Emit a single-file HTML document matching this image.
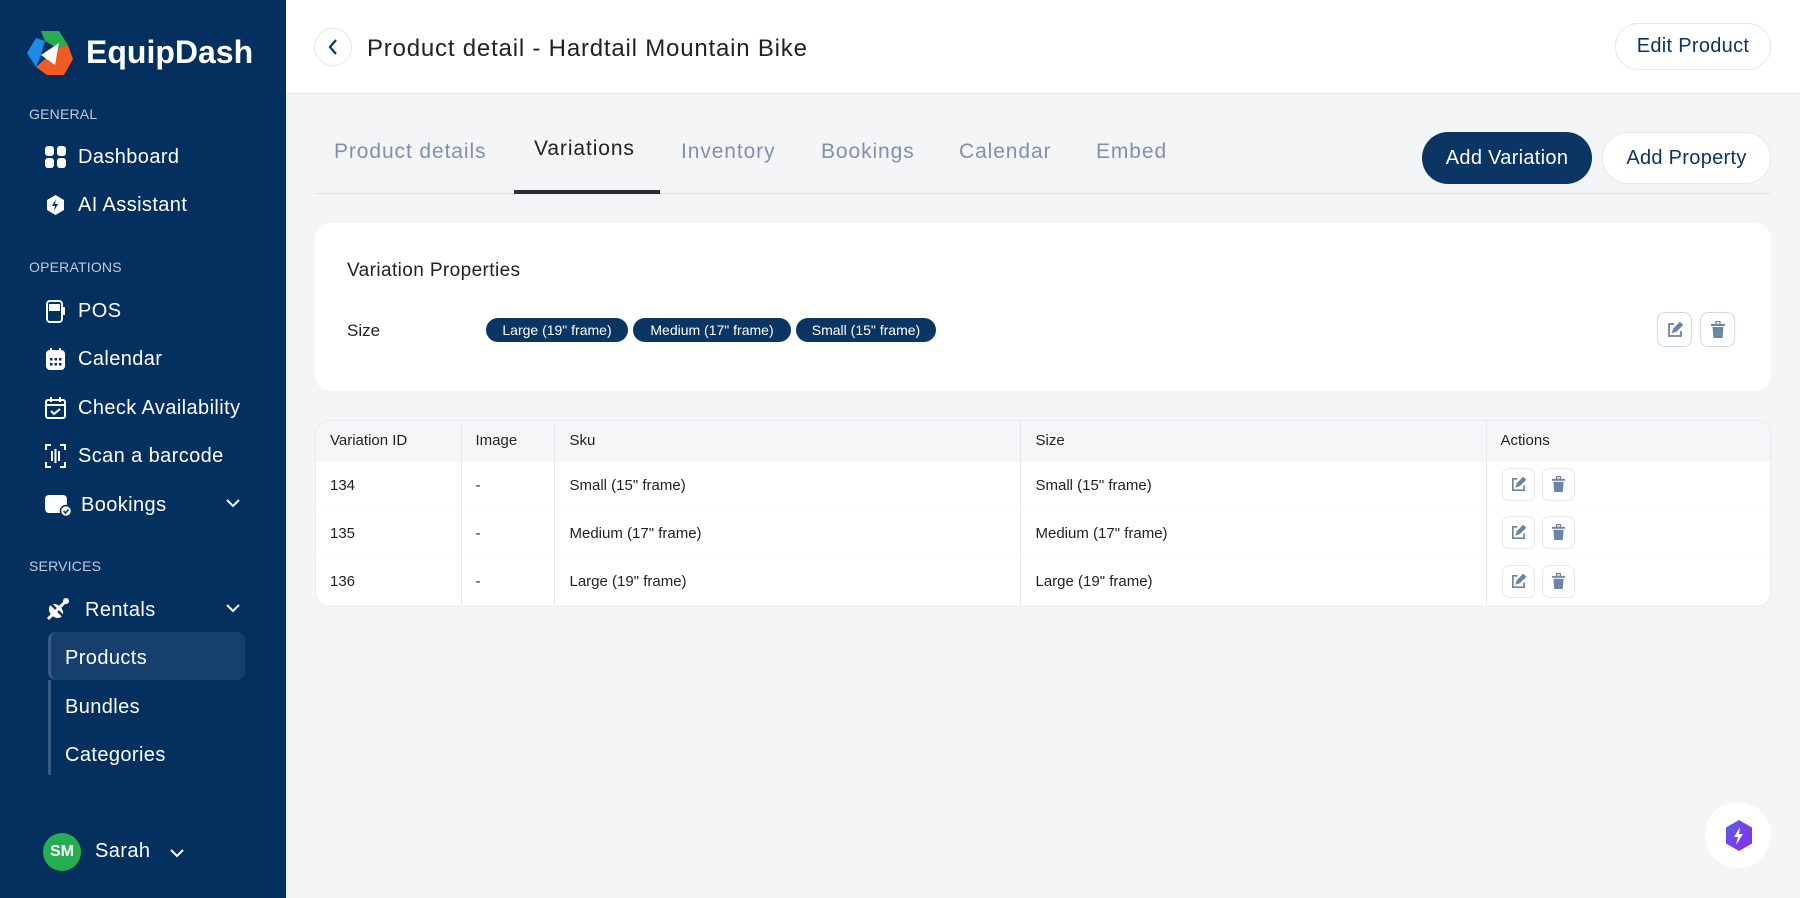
<!DOCTYPE html>
<html><head><meta charset="utf-8"><style>
*{box-sizing:border-box;margin:0;padding:0}
body{width:1800px;height:898px;overflow:hidden;background:#f4f5f7;font-family:"Liberation Sans",sans-serif;position:relative}
.abs{position:absolute}
#side{left:0;top:0;width:286px;height:898px;background:#03305f;color:#fff}
.sec{position:absolute;left:29px;font-size:14px;color:#c3cbd7;letter-spacing:.2px}
.it{position:absolute;left:45px;font-size:20px;display:flex;align-items:center;height:30px;letter-spacing:.4px}
.it svg{margin-right:12px}
.chev{position:absolute;left:225px}
#hdr{left:286px;top:0;right:0;height:94px;background:#fff;border-bottom:1px solid #e4e7eb}
.btn{position:absolute;border-radius:30px;display:flex;align-items:center;justify-content:center;font-size:20px;letter-spacing:.3px}
.tab{position:absolute;top:140px;font-size:21px;color:#7c93ab;letter-spacing:.9px}
.card{position:absolute;background:#fff;border-radius:16px}
.chip{position:absolute;top:318px;height:24px;border-radius:12px;background:#0b3563;color:#fff;font-size:14px;display:flex;align-items:center;justify-content:center}
.ib{position:absolute;width:35px;height:35px;border:1.5px solid #d3d9e1;border-radius:8px;background:#fff;display:flex;align-items:center;justify-content:center}
.sib{width:33px;height:33px;border:1.5px solid #e6e9ee;border-radius:7px}
table{border-collapse:collapse;width:100%;font-size:15px;color:#222}
td,th{text-align:left;font-weight:normal;padding:0 0 0 14px}
th{height:40px;background:#f5f6f7;border-right:1px solid #e6e8eb}
td{height:48px;border-top:1px solid #f7f8f9;border-right:1px solid #e6e8eb}
th:last-child,td:last-child{border-right:none}
</style></head><body>
<div id="side" class="abs">
 <svg class="abs" style="left:27px;top:31px" width="46" height="44" viewBox="0 0 46 44">
  <polygon points="14,0 32,0 41,14 30,17 18,10" fill="#27ae4f"/>
  <polygon points="0,22 9,7 18,10 14,24 9,36" fill="#1d8be6"/>
  <polygon points="9,36 30,17 41,14 46,28 37,44 20,44" fill="#f05a23"/>
  <polygon points="14,24 32,12 28,34" fill="#fff"/>
 </svg>
 <div class="abs" style="left:86px;top:34px;font-size:32px;font-weight:bold;letter-spacing:0px">EquipDash</div>
 <div class="sec" style="top:106px">GENERAL</div>
 <div class="it" style="top:142px"><svg width="21" height="22" viewBox="0 0 21 22" fill="#fff"><rect x="0" y="0" width="9" height="10" rx="3"/><rect x="12" y="0" width="9" height="10" rx="3"/><rect x="0" y="12" width="9" height="10" rx="3"/><rect x="12" y="12" width="9" height="10" rx="3"/></svg>Dashboard</div>
 <div class="it" style="top:190px"><svg width="21" height="22" viewBox="0 0 21 22"><polygon points="10.5,1 19,6 19,16 10.5,21 2,16 2,6" fill="#fff"/><polygon points="11,5 7,12 10,12 9,17 13,10 10,10" fill="#03305f"/></svg>AI Assistant</div>
 <div class="sec" style="top:259px">OPERATIONS</div>
 <div class="it" style="top:296px"><svg width="21" height="26" viewBox="0 0 21 26" fill="none" stroke="#fff" stroke-width="2"><rect x="2" y="3" width="15" height="21" rx="3"/><rect x="5" y="7" width="9" height="5" fill="#fff"/><path d="M17 10h2v6h-2"/></svg>POS</div>
 <div class="it" style="top:344px"><svg width="21" height="24" viewBox="0 0 21 24"><rect x="1" y="3" width="19" height="20" rx="4" fill="#fff"/><path d="M6 1v4M15 1v4" stroke="#fff" stroke-width="2"/><g fill="#03305f"><rect x="5" y="11" width="2.5" height="2.5"/><rect x="9.5" y="11" width="2.5" height="2.5"/><rect x="14" y="11" width="2.5" height="2.5"/><rect x="5" y="16" width="2.5" height="2.5"/><rect x="9.5" y="16" width="2.5" height="2.5"/><rect x="14" y="16" width="2.5" height="2.5"/></g></svg>Calendar</div>
 <div class="it" style="top:393px"><svg width="21" height="24" viewBox="0 0 21 24" fill="none" stroke="#fff" stroke-width="2"><rect x="1" y="4" width="19" height="18" rx="2"/><path d="M1 9h19M6 1v5M15 1v5M6 15l3 3 6-5"/></svg>Check Availability</div>
 <div class="it" style="top:441px"><svg width="21" height="24" viewBox="0 0 21 24" fill="none" stroke="#fff" stroke-width="2"><path d="M1 6V1h5M15 1h5v5M20 18v5h-5M6 23H1v-5M7 7v10M10.5 5v14M14 7v10"/></svg>Scan a barcode</div>
 <div class="it" style="top:490px"><svg width="26" height="24" viewBox="0 0 26 24"><rect x="0" y="2" width="22" height="18" rx="4" fill="#fff"/><circle cx="21" cy="18" r="5.5" fill="#fff" stroke="#03305f" stroke-width="1.5"/><path d="M18.5 18l2 2 3-3.5" stroke="#03305f" stroke-width="1.5" fill="none"/></svg><span style="margin-left:-2px">Bookings</span></div>
 <svg class="chev" style="top:498px" width="16" height="10" viewBox="0 0 16 10" fill="none" stroke="#fff" stroke-width="2"><path d="M2 2l6 6 6-6"/></svg>
 <div class="sec" style="top:558px">SERVICES</div>
 <div class="it" style="top:595px"><svg width="24" height="24" viewBox="0 0 24 24"><ellipse cx="11" cy="13" rx="8" ry="6" transform="rotate(45 11 13)" fill="#fff"/><path d="M3 3l18 18" stroke="#03305f" stroke-width="2.5"/><path d="M3 21L21 3" stroke="#fff" stroke-width="3"/><circle cx="21" cy="3" r="3" fill="#fff"/></svg><span style="margin-left:4px">Rentals</span></div>
 <svg class="chev" style="top:603px" width="16" height="10" viewBox="0 0 16 10" fill="none" stroke="#fff" stroke-width="2"><path d="M2 2l6 6 6-6"/></svg>
 <div class="abs" style="left:48px;top:632px;width:197px;height:48px;background:#173f6d;border-radius:8px;border-left:3px solid #3b5c84"></div>
 <div class="abs" style="left:48px;top:680px;width:3px;height:95px;background:#3b5c84"></div>
 <div class="abs" style="left:65px;top:647px;font-size:20px;letter-spacing:.4px">Products</div>
 <div class="abs" style="left:65px;top:696px;font-size:20px;letter-spacing:.4px">Bundles</div>
 <div class="abs" style="left:65px;top:744px;font-size:20px;letter-spacing:.4px">Categories</div>
 <div class="abs" style="left:43px;top:833px;width:38px;height:38px;border-radius:50%;background:#27ae4f;font-size:16px;font-weight:bold;display:flex;align-items:center;justify-content:center">SM</div>
 <div class="abs" style="left:95px;top:840px;font-size:20px;letter-spacing:.4px">Sarah</div>
 <svg class="abs" style="left:169px;top:848px" width="16" height="10" viewBox="0 0 16 10" fill="none" stroke="#fff" stroke-width="2"><path d="M2 2l6 6 6-6"/></svg>
</div>
<div id="hdr" class="abs"></div>
<div class="abs" style="left:314px;top:28px;width:38px;height:38px;border-radius:50%;border:1px solid #e3e6ea;background:#fff"></div>
<svg class="abs" style="left:327px;top:38px" width="12" height="18" viewBox="0 0 12 18" fill="none" stroke="#0b3563" stroke-width="2.2"><path d="M9 2L3 9l6 7"/></svg>
<div class="abs" style="left:367px;top:35px;font-size:24px;color:#222;letter-spacing:.8px">Product detail - Hardtail Mountain Bike</div>
<div class="btn" style="left:1615px;top:23px;width:156px;height:47px;border:1px solid #e3e6ea;background:#fff;color:#0b3563">Edit Product</div>
<div class="tab" style="left:334px">Product details</div>
<div class="tab" style="left:534px;top:137px;color:#222">Variations</div>
<div class="tab" style="left:681px">Inventory</div>
<div class="tab" style="left:821px">Bookings</div>
<div class="tab" style="left:959px">Calendar</div>
<div class="tab" style="left:1096px">Embed</div>
<div class="abs" style="left:314px;top:193px;width:1456px;height:1px;background:#dfe3e8"></div>
<div class="abs" style="left:514px;top:190px;width:146px;height:4px;background:#2a2f36"></div>
<div class="btn" style="left:1422px;top:132px;width:170px;height:52px;background:#0b3563;color:#fff">Add Variation</div>
<div class="btn" style="left:1602px;top:132px;width:169px;height:52px;background:#fff;border:1px solid #e6e9ed;color:#0b3563">Add Property</div>
<div class="card" style="left:315px;top:223px;width:1456px;height:168px"></div>
<div class="abs" style="left:347px;top:260px;font-size:19px;color:#222;letter-spacing:.4px">Variation Properties</div>
<div class="abs" style="left:347px;top:321px;font-size:17px;color:#222">Size</div>
<div class="chip" style="left:486px;width:142px">Large (19" frame)</div>
<div class="chip" style="left:633px;width:158px">Medium (17" frame)</div>
<div class="chip" style="left:796px;width:140px">Small (15" frame)</div>
<div class="ib" style="left:1657px;top:312px"><svg width="18" height="18" viewBox="0 0 18 18" fill="none" stroke="#6a85a5" stroke-width="1.8"><path d="M8 3H3v12h12v-5"/><path d="M7 11l1-3 6-6 2 2-6 6z" fill="#6a85a5"/></svg></div>
<div class="ib" style="left:1700px;top:312px"><svg width="16" height="18" viewBox="0 0 16 18" fill="#6a85a5"><rect x="1" y="3" width="14" height="2"/><rect x="6" y="0.5" width="4" height="3" fill="none" stroke="#6a85a5" stroke-width="1.3"/><path d="M2.5 6h11l-1 11h-9z"/></svg></div>
<div class="card" style="left:315px;top:420px;width:1456px;height:187px;border:1px solid #e8eaed;overflow:hidden;border-radius:14px">
<table>
<colgroup><col style="width:145px"><col style="width:93px"><col style="width:466px"><col style="width:466px"><col></colgroup>
<tr><th>Variation ID</th><th>Image</th><th style="padding-left:15px">Sku</th><th style="padding-left:15px">Size</th><th>Actions</th></tr>
<tr><td>134</td><td>-</td><td style="padding-left:15px">Small (15" frame)</td><td style="padding-left:15px">Small (15" frame)</td><td></td></tr>
<tr><td>135</td><td>-</td><td style="padding-left:15px">Medium (17" frame)</td><td style="padding-left:15px">Medium (17" frame)</td><td></td></tr>
<tr><td>136</td><td>-</td><td style="padding-left:15px">Large (19" frame)</td><td style="padding-left:15px">Large (19" frame)</td><td></td></tr>
</table></div>
<div class="ib sib" style="left:1502px;top:468px"><svg width="17" height="17" viewBox="0 0 18 18" fill="none" stroke="#6a85a5" stroke-width="1.8"><path d="M8 3H3v12h12v-5"/><path d="M7 11l1-3 6-6 2 2-6 6z" fill="#6a85a5"/></svg></div>
<div class="ib sib" style="left:1542px;top:468px"><svg width="15" height="17" viewBox="0 0 16 18" fill="#6a85a5"><rect x="1" y="3" width="14" height="2"/><rect x="6" y="0.5" width="4" height="3" fill="none" stroke="#6a85a5" stroke-width="1.3"/><path d="M2.5 6h11l-1 11h-9z"/></svg></div>
<div class="ib sib" style="left:1502px;top:516px"><svg width="17" height="17" viewBox="0 0 18 18" fill="none" stroke="#6a85a5" stroke-width="1.8"><path d="M8 3H3v12h12v-5"/><path d="M7 11l1-3 6-6 2 2-6 6z" fill="#6a85a5"/></svg></div>
<div class="ib sib" style="left:1542px;top:516px"><svg width="15" height="17" viewBox="0 0 16 18" fill="#6a85a5"><rect x="1" y="3" width="14" height="2"/><rect x="6" y="0.5" width="4" height="3" fill="none" stroke="#6a85a5" stroke-width="1.3"/><path d="M2.5 6h11l-1 11h-9z"/></svg></div>
<div class="ib sib" style="left:1502px;top:565px"><svg width="17" height="17" viewBox="0 0 18 18" fill="none" stroke="#6a85a5" stroke-width="1.8"><path d="M8 3H3v12h12v-5"/><path d="M7 11l1-3 6-6 2 2-6 6z" fill="#6a85a5"/></svg></div>
<div class="ib sib" style="left:1542px;top:565px"><svg width="15" height="17" viewBox="0 0 16 18" fill="#6a85a5"><rect x="1" y="3" width="14" height="2"/><rect x="6" y="0.5" width="4" height="3" fill="none" stroke="#6a85a5" stroke-width="1.3"/><path d="M2.5 6h11l-1 11h-9z"/></svg></div>
<div class="abs" style="left:1705px;top:802px;width:66px;height:66px;border-radius:50%;background:#fff"></div>
<svg class="abs" style="left:1724px;top:819px" width="30" height="33" viewBox="0 0 30 33"><defs><linearGradient id="g" x1="0" y1="0" x2="1" y2="1"><stop offset="0" stop-color="#5b5cf0"/><stop offset="1" stop-color="#8a2be2"/></linearGradient></defs><polygon points="15,1 28,8.5 28,24.5 15,32 2,24.5 2,8.5" fill="url(#g)"/><polygon points="16,8 10,18 14,18 12,26 19,15 15,15" fill="#fff"/></svg>
</body></html>
